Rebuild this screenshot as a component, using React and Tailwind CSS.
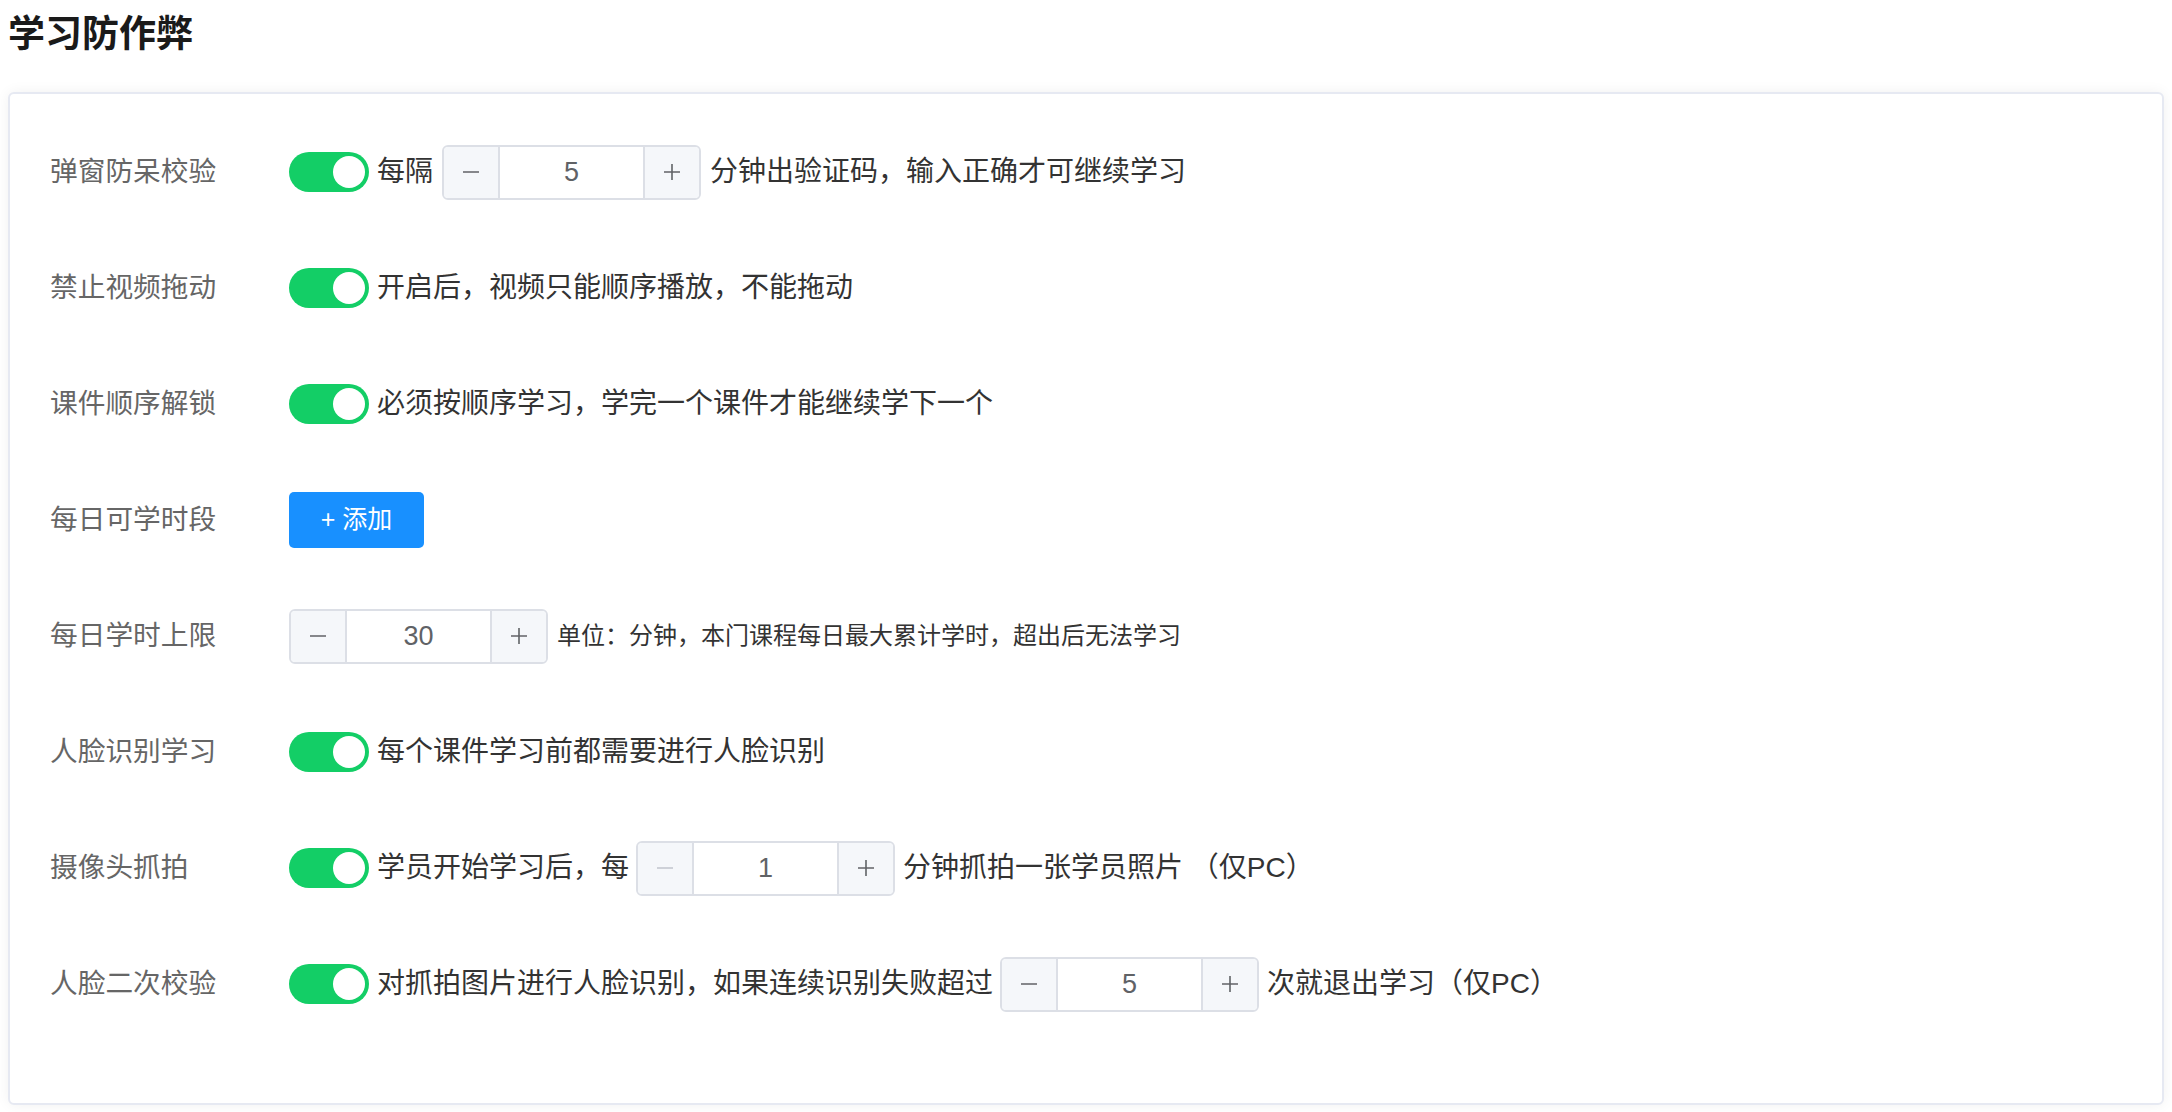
import React, { useState } from 'react';

const FONT = { fontFamily: '"Liberation Sans", "Noto Sans CJK SC", sans-serif' };

function Toggle({ on, onChange }) {
  return (
    <button
      className={`${on ? 'bg-[#13ce66]' : 'bg-[#dcdfe6]'} relative h-[40px] w-[80px] shrink-0 rounded-full`}
      onClick={() => onChange(!on)}
    >
      <span
        className={`absolute top-[4px] h-[32px] w-[32px] rounded-full bg-white ${on ? 'left-[44px]' : 'left-[4px]'}`}
      />
    </button>
  );
}

// thin minus / plus like element-ui input-number
function Sign({ plus }) {
  return (
    <svg width="18" height="18" viewBox="0 0 18 18" stroke="currentColor" strokeWidth="1.6" fill="none">
      <path d="M1 9h16" />
      {plus && <path d="M9 1v16" />}
    </svg>
  );
}

function Stepper({ value, min = 1, onChange }) {
  const atMin = value <= min;
  return (
    <div className="flex h-[55px] w-[259px] shrink-0 overflow-hidden rounded-[6px] border-2 border-[#dcdfe6] bg-white">
      <button
        className={`flex w-[56px] items-center justify-center border-r-2 border-[#dcdfe6] bg-[#f5f7fa] ${atMin ? 'text-[#c0c4cc]' : 'text-[#606266]'}`}
        onClick={() => !atMin && onChange(value - 1)}
      >
        <Sign />
      </button>
      <div className="flex flex-1 items-center justify-center text-[27px] text-[#606266]">{value}</div>
      <button
        className="flex w-[56px] items-center justify-center border-l-2 border-[#dcdfe6] bg-[#f5f7fa] text-[#606266]"
        onClick={() => onChange(value + 1)}
      >
        <Sign plus />
      </button>
    </div>
  );
}

function Row({ label, children }) {
  return (
    <div className="flex h-[56px] items-center">
      <div className="w-[239px] shrink-0 text-[27.7px] text-[#666666]">{label}</div>
      <div className="flex items-center text-[28px] text-[#333333]">{children}</div>
    </div>
  );
}

export default function App() {
  const [sw, setSw] = useState({ popup: true, drag: true, order: true, face: true, camera: true, recheck: true });
  const [popupMin, setPopupMin] = useState(5);
  const [dailyLimit, setDailyLimit] = useState(30);
  const [snapMin, setSnapMin] = useState(1);
  const [failTimes, setFailTimes] = useState(5);

  const flip = (k) => (v) => setSw({ ...sw, [k]: v });

  return (
    <div className="min-h-[1112px] w-full bg-white" style={FONT}>
      <h1 className="px-[8px] pt-[14px] text-[37px] font-bold leading-[42px] text-[#1a1a1a]">学习防作弊</h1>
      <div className="mx-[8px] mt-[36px] flex flex-col gap-[60px] rounded-[6px] border-2 border-[#e6e9f2] bg-white pb-[91px] pl-[40px] pt-[50px] shadow-[0_0_14px_0_rgba(0,0,0,0.06)]">
        <Row label="弹窗防呆校验">
          <Toggle on={sw.popup} onChange={flip('popup')} />
          <span className="ml-[8px] mr-[9px]">每隔</span>
          <Stepper value={popupMin} onChange={setPopupMin} />
          <span className="ml-[9px]">分钟出验证码，输入正确才可继续学习</span>
        </Row>
        <Row label="禁止视频拖动">
          <Toggle on={sw.drag} onChange={flip('drag')} />
          <span className="ml-[8px]">开启后，视频只能顺序播放，不能拖动</span>
        </Row>
        <Row label="课件顺序解锁">
          <Toggle on={sw.order} onChange={flip('order')} />
          <span className="ml-[8px]">必须按顺序学习，学完一个课件才能继续学下一个</span>
        </Row>
        <Row label="每日可学时段">
          <button className="flex h-[56px] w-[135px] items-center justify-center rounded-[5px] bg-[#1890ff] text-[25px] text-white">
            + 添加
          </button>
        </Row>
        <Row label="每日学时上限">
          <Stepper value={dailyLimit} onChange={setDailyLimit} />
          <span className="ml-[9px] text-[24px]">单位：分钟，本门课程每日最大累计学时，超出后无法学习</span>
        </Row>
        <Row label="人脸识别学习">
          <Toggle on={sw.face} onChange={flip('face')} />
          <span className="ml-[8px]">每个课件学习前都需要进行人脸识别</span>
        </Row>
        <Row label="摄像头抓拍">
          <Toggle on={sw.camera} onChange={flip('camera')} />
          <span className="ml-[8px] mr-[7px]">学员开始学习后，每</span>
          <Stepper value={snapMin} onChange={setSnapMin} />
          <span className="ml-[8px]">分钟抓拍一张学员照片 （仅PC）</span>
        </Row>
        <Row label="人脸二次校验">
          <Toggle on={sw.recheck} onChange={flip('recheck')} />
          <span className="ml-[8px] mr-[7px]">对抓拍图片进行人脸识别，如果连续识别失败超过</span>
          <Stepper value={failTimes} onChange={setFailTimes} />
          <span className="ml-[8px]">次就退出学习（仅PC）</span>
        </Row>
      </div>
    </div>
  );
}
